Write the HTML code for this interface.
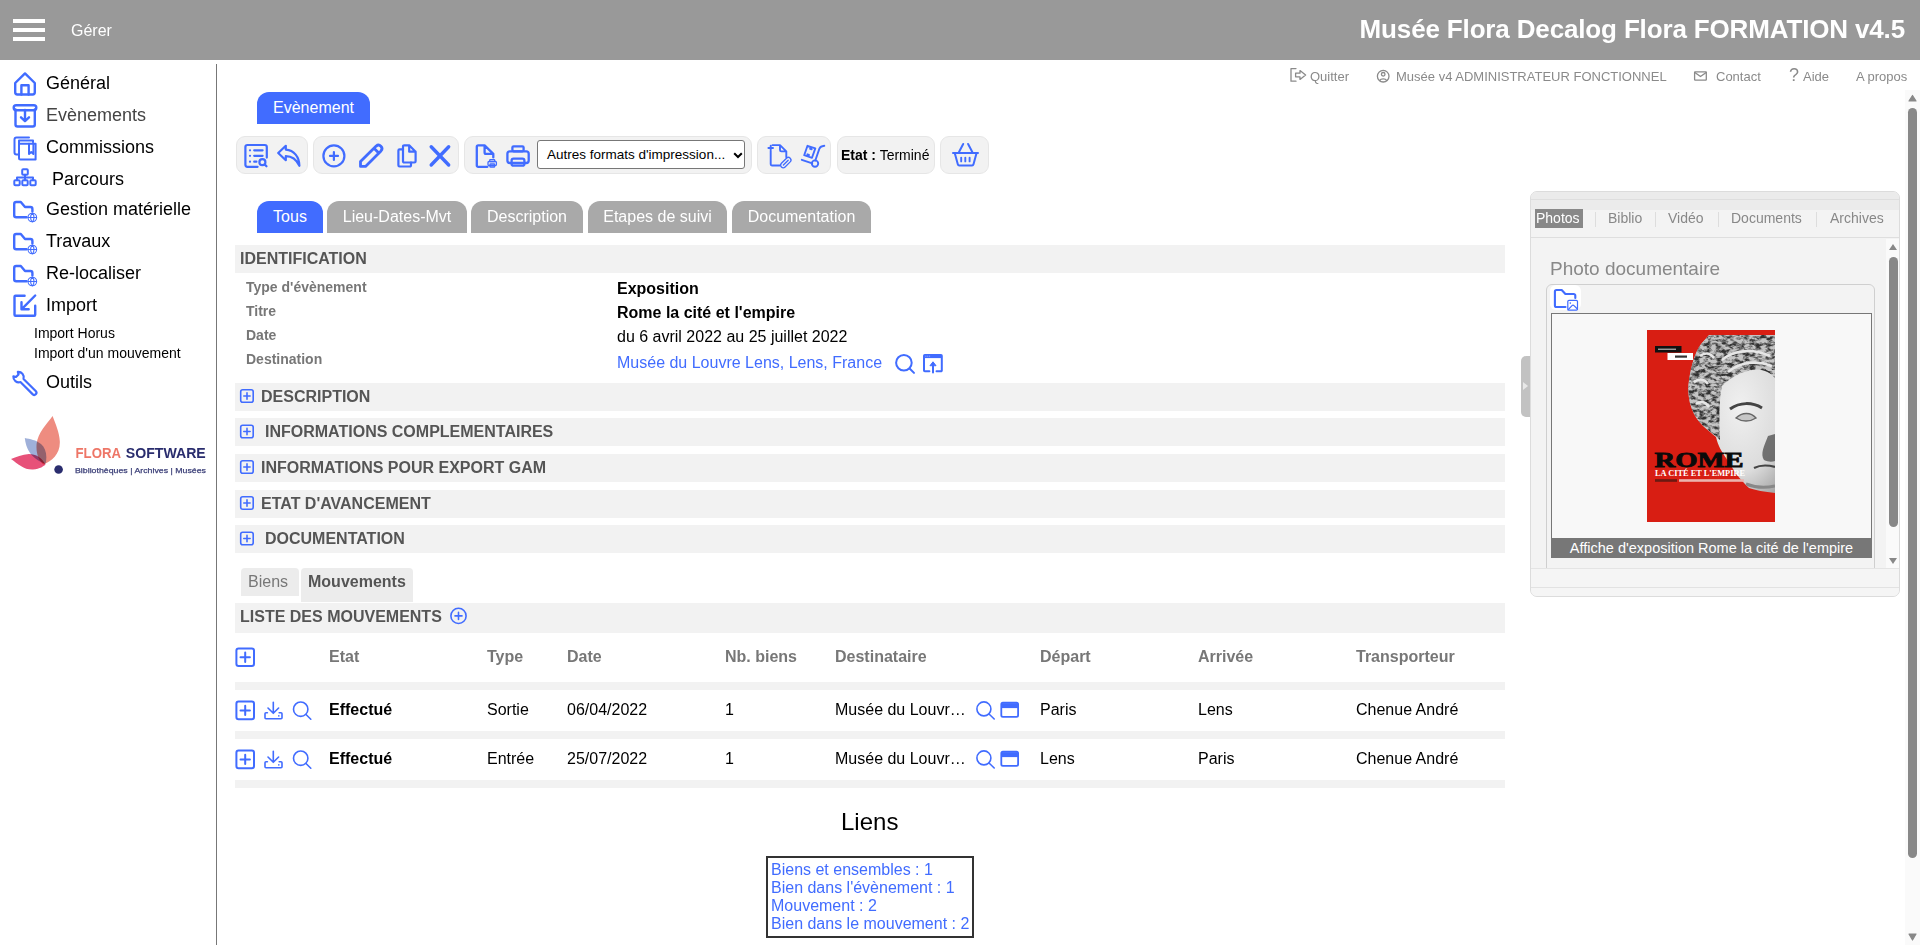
<!DOCTYPE html>
<html><head><meta charset="utf-8">
<style>
*{box-sizing:border-box;margin:0;padding:0}
html,body{width:1920px;height:945px;overflow:hidden;background:#fff;font-family:"Liberation Sans",sans-serif;color:#000}
.a{position:absolute;white-space:nowrap}
svg.i{position:absolute;fill:none;stroke:#416cff;stroke-width:2;stroke-linecap:round;stroke-linejoin:round}
#hdr{position:absolute;left:0;top:0;width:1920px;height:60px;background:#999}
.nav{font-size:18px;color:#000}
.sub{font-size:14px;color:#000}
.toplink{font-size:13px;color:#8a8a8a;top:69px}
.grp{position:absolute;top:136px;height:38px;background:#f2f2f2;border:1px solid #e6e6e6;border-radius:9px}
.tab{position:absolute;top:201px;height:32px;border-radius:12px 12px 0 0;background:#a9a9a9;color:#fff;font-size:16px;text-align:center;line-height:31px}
.sec{position:absolute;left:235px;width:1270px;background:#f2f2f2;height:28px}
.sect{position:absolute;font-size:16px;font-weight:bold;color:#555;top:5px}
.lbl{font-size:14px;font-weight:bold;color:#777}
.val{font-size:16px;color:#000}
.th{font-size:16px;font-weight:bold;color:#777;top:648px}
.td{font-size:16px;color:#000}
.bar{position:absolute;left:235px;width:1270px;height:8px;background:#f2f2f2}
.lnk{font-size:16px;color:#416cff}
</style></head><body>
<div id="hdr"></div>
<div class="a" style="left:13px;top:19px;width:32px;height:4px;background:#fff"></div>
<div class="a" style="left:13px;top:28px;width:32px;height:4px;background:#fff"></div>
<div class="a" style="left:13px;top:37px;width:32px;height:4px;background:#fff"></div>
<div class="a" style="left:71px;top:22px;font-size:16px;color:#fff">Gérer</div>
<div class="a" id="title" style="right:15px;top:14px;font-size:26px;letter-spacing:-0.15px;font-weight:bold;color:#fff">Musée Flora Decalog Flora FORMATION v4.5</div>

<!-- sidebar -->
<div class="a" style="left:216px;top:64px;width:1px;height:881px;background:#777"></div>
<div class="a nav" style="left:46px;top:73px">Général</div>
<div class="a nav" style="left:46px;top:105px;color:#444">Evènements</div>
<div class="a nav" style="left:46px;top:137px">Commissions</div>
<div class="a nav" style="left:52px;top:169px">Parcours</div>
<div class="a nav" style="left:46px;top:199px">Gestion matérielle</div>
<div class="a nav" style="left:46px;top:231px">Travaux</div>
<div class="a nav" style="left:46px;top:263px">Re-localiser</div>
<div class="a nav" style="left:46px;top:295px">Import</div>
<div class="a sub" style="left:34px;top:325px">Import Horus</div>
<div class="a sub" style="left:34px;top:345px">Import d'un mouvement</div>
<div class="a nav" style="left:46px;top:372px">Outils</div>


<svg width="210" height="70" viewBox="5 410 210 70" style="position:absolute;left:5px;top:410px">
<g style="isolation:isolate"><path style="mix-blend-mode:multiply" d="M52.6 416 C47 424 38 432 36.6 444 C35.8 454 39 461 43.5 464.5 C52 461 60.5 454 59.8 441 C59.3 432 55.5 424 52.6 416 Z" fill="#ee8c80"/>
<path style="mix-blend-mode:multiply" d="M24.8 438 C26 448 30 458 45.5 464 C47.5 456 46 448 41 444 C36 440 30 439 24.8 438 Z" fill="#8ea2d2" opacity="0.85"/>
<path style="mix-blend-mode:multiply" d="M11 459 C18 464 24 470 33 469.6 C40 469 44 466 45.5 464.5 C42 458 36 454 29 454 C22 454.5 16 457 11 459 Z" fill="#e5426e" opacity="0.92"/></g>
<circle cx="58.6" cy="469.5" r="4.3" fill="#2a2d6e"/>
<text x="75.5" y="458.2" font-family="Liberation Sans" font-weight="bold" font-size="13.8" textLength="45.5" lengthAdjust="spacingAndGlyphs" fill="#ee7667">FLORA</text>
<text x="125.8" y="458.2" font-family="Liberation Sans" font-weight="bold" font-size="13.8" textLength="80" lengthAdjust="spacingAndGlyphs" fill="#2a2d6e">SOFTWARE</text>
<text x="75" y="472.6" font-family="Liberation Sans" font-size="7.8" stroke="#3b3f78" stroke-width="0.25" textLength="131" lengthAdjust="spacingAndGlyphs" fill="#3b3f78">Bibliothèques | Archives | Musées</text>
</svg>

<!-- top links -->
<div class="a toplink" style="left:1310px">Quitter</div>
<div class="a toplink" style="left:1396px">Musée v4 ADMINISTRATEUR FONCTIONNEL</div>
<div class="a toplink" style="left:1716px">Contact</div>
<div class="a toplink" style="left:1789px;top:65px;font-size:18px">?</div><div class="a toplink" style="left:1803px">Aide</div>
<div class="a toplink" style="left:1856px">A propos</div>

<!-- main -->
<div class="a" style="left:257px;top:92px;width:113px;height:32px;background:#416cff;border-radius:12px 12px 0 0;color:#fff;font-size:16px;text-align:center;line-height:31px">Evènement</div>

<div class="grp" style="left:235.5px;width:72px"></div>
<div class="grp" style="left:313px;width:146px"></div>
<div class="grp" style="left:464px;width:288px"></div>
<div class="grp" style="left:757px;width:74px"></div>
<div class="grp" style="left:837px;width:98px"></div>
<div class="grp" style="left:940px;width:49px"></div>
<div class="a" style="left:537px;top:140px;width:208px;height:29px;border:1px solid #777;border-radius:3px;background:#fff;font-size:13.5px;line-height:27px;padding-left:9px">Autres formats d'impression...<svg style="position:absolute;left:195px;top:11px" width="10" height="7"><path d="M1.2 1.2 L5 5 L8.8 1.2" fill="none" stroke="#000" stroke-width="2"/></svg></div>
<div class="a" style="left:841px;top:147px;font-size:14px"><b>Etat :</b> Terminé</div>

<div class="tab" style="left:257px;width:66px;background:#416cff">Tous</div>
<div class="tab" style="left:327px;width:140px">Lieu-Dates-Mvt</div>
<div class="tab" style="left:471px;width:112px">Description</div>
<div class="tab" style="left:588px;width:139px">Etapes de suivi</div>
<div class="tab" style="left:732px;width:139px">Documentation</div>

<div class="sec" style="top:245px"><div class="sect" style="left:5px">IDENTIFICATION</div></div>
<div class="a lbl" style="left:246px;top:279px">Type d'évènement</div>
<div class="a lbl" style="left:246px;top:303px">Titre</div>
<div class="a lbl" style="left:246px;top:327px">Date</div>
<div class="a lbl" style="left:246px;top:351px">Destination</div>
<div class="a val" style="left:617px;top:280px;font-weight:bold">Exposition</div>
<div class="a val" style="left:617px;top:304px;font-weight:bold">Rome la cité et l'empire</div>
<div class="a val" style="left:617px;top:328px">du 6 avril 2022 au 25 juillet 2022</div>
<div class="a val" style="left:617px;top:354px;color:#416cff">Musée du Louvre Lens, Lens, France</div>

<div class="sec" style="top:383px"><div class="sect" style="left:26px">DESCRIPTION</div></div>
<div class="sec" style="top:418px"><div class="sect" style="left:30px">INFORMATIONS COMPLEMENTAIRES</div></div>
<div class="sec" style="top:454px"><div class="sect" style="left:26px">INFORMATIONS POUR EXPORT GAM</div></div>
<div class="sec" style="top:490px"><div class="sect" style="left:26px">ETAT D'AVANCEMENT</div></div>
<div class="sec" style="top:525px"><div class="sect" style="left:30px">DOCUMENTATION</div></div>

<div class="a" style="left:241px;top:568px;width:58px;height:28px;background:#ececec;border-radius:4px 4px 0 0;font-size:16px;color:#777;line-height:27px;padding-left:7px">Biens</div>
<div class="a" style="left:301px;top:568px;width:112px;height:34px;background:#ececec;border-radius:4px 4px 0 0;font-size:16px;color:#555;font-weight:bold;line-height:27px;padding-left:7px">Mouvements</div>
<div class="sec" style="top:603px;height:30px"><div class="sect" style="left:5px;top:5px">LISTE DES MOUVEMENTS</div></div>

<div class="a th" style="left:329px">Etat</div>
<div class="a th" style="left:487px">Type</div>
<div class="a th" style="left:567px">Date</div>
<div class="a th" style="left:725px">Nb. biens</div>
<div class="a th" style="left:835px">Destinataire</div>
<div class="a th" style="left:1040px">Départ</div>
<div class="a th" style="left:1198px">Arrivée</div>
<div class="a th" style="left:1356px">Transporteur</div>
<div class="bar" style="top:682px"></div>
<div class="bar" style="top:731px"></div>
<div class="bar" style="top:780px"></div>

<div class="a td" style="left:329px;top:701px;font-weight:bold">Effectué</div>
<div class="a td" style="left:487px;top:701px">Sortie</div>
<div class="a td" style="left:567px;top:701px">06/04/2022</div>
<div class="a td" style="left:725px;top:701px">1</div>
<div class="a td" style="left:835px;top:701px">Musée du Louvr…</div>
<div class="a td" style="left:1040px;top:701px">Paris</div>
<div class="a td" style="left:1198px;top:701px">Lens</div>
<div class="a td" style="left:1356px;top:701px">Chenue André</div>

<div class="a td" style="left:329px;top:750px;font-weight:bold">Effectué</div>
<div class="a td" style="left:487px;top:750px">Entrée</div>
<div class="a td" style="left:567px;top:750px">25/07/2022</div>
<div class="a td" style="left:725px;top:750px">1</div>
<div class="a td" style="left:835px;top:750px">Musée du Louvr…</div>
<div class="a td" style="left:1040px;top:750px">Lens</div>
<div class="a td" style="left:1198px;top:750px">Paris</div>
<div class="a td" style="left:1356px;top:750px">Chenue André</div>

<div class="a" style="left:841px;top:808px;font-size:24px">Liens</div>
<div class="a" style="left:766px;top:856px;width:208px;height:82px;border:2px solid #333;padding:3px 0 0 3px;line-height:18px">
<div class="lnk">Biens et ensembles : 1</div>
<div class="lnk">Bien dans l'évènement : 1</div>
<div class="lnk">Mouvement : 2</div>
<div class="lnk">Bien dans le mouvement : 2</div>
</div>

<!-- right panel -->
<div class="a" style="left:1530px;top:191px;width:370px;height:406px;background:#f3f3f3;border:1px solid #dcdcdc;border-radius:7px;overflow:hidden">
 <div style="position:absolute;left:0;top:0;width:368px;height:8px;background:#ebebeb;border-bottom:1px solid #dedede"></div>
 <div style="position:absolute;left:0;top:8px;width:368px;height:10px;background:#ebebeb"></div>
 <div style="position:absolute;left:0;top:45px;width:368px;height:1px;background:#dedede"></div>
 <div style="position:absolute;left:4px;top:17px;width:48px;height:19px;background:#888"></div>
 <div class="a" style="left:5px;top:18px;font-size:14px;color:#fff;line-height:17px">Photos</div>
 <div class="a" style="left:77px;top:18px;font-size:14px;color:#888;line-height:17px">Biblio</div>
 <div class="a" style="left:137px;top:18px;font-size:14px;color:#888;line-height:17px">Vidéo</div>
 <div class="a" style="left:200px;top:18px;font-size:14px;color:#888;line-height:17px">Documents</div>
 <div class="a" style="left:299px;top:18px;font-size:14px;color:#888;line-height:17px">Archives</div>
 <div style="position:absolute;left:64px;top:20px;width:1px;height:15px;background:#ddd"></div>
 <div style="position:absolute;left:124px;top:20px;width:1px;height:15px;background:#ddd"></div>
 <div style="position:absolute;left:187px;top:20px;width:1px;height:15px;background:#ddd"></div>
 <div style="position:absolute;left:285px;top:20px;width:1px;height:15px;background:#ddd"></div>
 <div style="position:absolute;left:355px;top:47px;width:14px;height:330px;background:#fafafa"></div>
 <div style="position:absolute;left:358px;top:65px;width:9px;height:270px;background:#888;border-radius:5px"></div>
 <div style="position:absolute;left:358px;top:52px;width:0;height:0;border-left:4.5px solid transparent;border-right:4.5px solid transparent;border-bottom:6px solid #888"></div>
 <div style="position:absolute;left:358px;top:366px;width:0;height:0;border-left:4.5px solid transparent;border-right:4.5px solid transparent;border-top:6px solid #888"></div>
 <div class="a" style="left:19px;top:65.5px;font-size:19px;color:#888">Photo documentaire</div>
 <div style="position:absolute;left:15px;top:92px;width:329px;height:290px;border:1px solid #cfcfcf;border-radius:6px"></div>
 <div style="position:absolute;left:19px;top:93px;width:31px;height:25px;background:#fff;border-radius:6px"></div>
 <div style="position:absolute;left:20px;top:121px;width:321px;height:245px;background:#f8f8f8;border:1px solid #777"></div>
 <div style="position:absolute;left:20px;top:346px;width:321px;height:20px;background:#777;color:#fff;font-size:14.5px;text-align:center;line-height:20px">Affiche d'exposition Rome la cité de l'empire</div>
 <div style="position:absolute;left:0;top:376px;width:368px;height:30px;background:#f5f5f5;border-top:1px solid #e4e4e4"></div>
 <div style="position:absolute;left:0;top:395px;width:368px;height:1px;background:#e2e2e2"></div>
</div>

<svg width="128" height="192" viewBox="1647 330 128 192" style="position:absolute;left:1647px;top:330px">
<defs>
<radialGradient id="fc" cx="0.6" cy="0.45" r="0.65"><stop offset="0" stop-color="#f0f0f0"/><stop offset="0.6" stop-color="#dcdcdc"/><stop offset="1" stop-color="#9c9c9c"/></radialGradient>
<filter id="tx" x="0" y="0" width="100%" height="100%"><feTurbulence type="fractalNoise" baseFrequency="0.18 0.3" numOctaves="3" seed="7"/><feColorMatrix type="matrix" values="0 0 0 0 0  0 0 0 0 0  0 0 0 0 0  3.2 0 0 0 -1.25"/></filter>
<clipPath id="hc"><path d="M1709 335 H1775 V493 C1765 492 1755 490 1749 488 C1740 480 1732 468 1726 458 C1722 452 1718 446 1716 437 C1708 430 1699 424 1694 414 C1689 404 1687 392 1689 380 C1691 366 1695 352 1701 344 Z"/></clipPath>
<clipPath id="hr"><path d="M1709 335 H1775 V378 C1770 372 1762 368 1752 370 C1740 372 1730 378 1722 386 C1719 400 1719 420 1720 440 C1712 432 1700 426 1694 414 C1689 404 1687 392 1689 380 C1691 366 1695 352 1701 344 Z"/></clipPath>
</defs>
<rect x="1647" y="330" width="128" height="192" fill="#d81e13"/>
<g clip-path="url(#hc)">
<rect x="1680" y="330" width="100" height="170" fill="url(#fc)"/>
<g clip-path="url(#hr)">
<rect x="1680" y="330" width="100" height="120" fill="#c4c4c4"/>
<rect x="1680" y="330" width="100" height="120" fill="#000" filter="url(#tx)" opacity="0.75"/>
<path d="M1722 360 C1734 350 1752 348 1770 356 M1728 372 C1740 362 1756 360 1772 366 M1700 356 q8 -6 14 2 M1694 382 q8 -6 14 2 M1696 404 q8 -5 13 3" stroke="#e6e6e6" stroke-width="2.6" fill="none"/>
</g>
<path d="M1730 409 C1740 402 1752 402 1762 408" stroke="#444" stroke-width="3" fill="none"/>
<path d="M1736 418 C1742 412 1751 412 1756 418 C1750 422 1742 422 1736 418 Z" fill="#c6c6c6" stroke="#666" stroke-width="1.4"/>
<path d="M1768 436 C1764 446 1760 454 1764 460 C1768 462 1772 462 1775 461 V434 Z" fill="#555" opacity="0.8"/>
<path d="M1754 468 C1760 465 1768 465 1775 467" stroke="#444" stroke-width="2.2" fill="none"/>
<path d="M1746 484 C1756 488 1766 488 1775 486" stroke="#888" stroke-width="3" fill="none"/>
</g>
<rect x="1655" y="346" width="26.5" height="6.5" fill="#111"/>
<rect x="1667.5" y="353" width="25.5" height="7" fill="#fff"/>
<rect x="1658" y="348.6" width="18" height="1.3" fill="#aaa"/>
<rect x="1675" y="355.5" width="12" height="2.2" fill="#333"/>
<text x="1654.5" y="466.8" font-family="Liberation Serif" font-weight="bold" font-size="21" textLength="89" lengthAdjust="spacingAndGlyphs" fill="#0a0a0a" stroke="#0a0a0a" stroke-width="0.8">ROME</text>
<text x="1655" y="476.3" font-family="Liberation Serif" font-weight="bold" font-size="8" textLength="90" lengthAdjust="spacingAndGlyphs" fill="#fff">LA CITÉ ET L'EMPIRE</text>
<rect x="1655" y="479.2" width="22" height="2.6" fill="#6a1a12"/>
<rect x="1679" y="479.2" width="65" height="2.6" fill="#eab4ad"/>
</svg>
<div class="a" style="left:1521px;top:356px;width:9px;height:61px;background:#c2c2c2;border-radius:5px 0 0 5px"></div>
<div class="a" style="left:1523px;top:382px;width:0;height:0;border-top:4px solid transparent;border-bottom:4px solid transparent;border-left:5px solid #e8e8e8"></div>


<!-- page scrollbar -->
<div class="a" style="left:1905px;top:90px;width:15px;height:855px;background:#fafafa"></div>
<div class="a" style="left:1908px;top:108px;width:9px;height:750px;background:#888;border-radius:4.5px"></div>
<svg class="a" style="left:1905px;top:90px" width="15" height="855"><path d="M4 11 L7.5 5.5 L11 11 Z M4 844 L7.5 850 L11 844 Z" fill="#888" stroke="#888" stroke-width="1.2" stroke-linejoin="round"/></svg>

<svg class="ov" width="1920" height="945" viewBox="0 0 1920 945" style="position:absolute;left:0;top:0;pointer-events:none" fill="none" stroke="#416cff" stroke-linecap="round" stroke-linejoin="round">
<!-- sidebar icons -->
<g stroke-width="2.4">
<path d="M15.2 83 L25 73.4 L34.8 83 V92.3 a2.2 2.2 0 0 1 -2.2 2.2 H17.4 a2.2 2.2 0 0 1 -2.2 -2.2 Z"/>
<path d="M21.4 94.5 V85.2 H28.6 V94.5"/>
<path d="M16.2 105.2 H33.8 a2.3 2.3 0 0 1 0 5 H16.2 a2.3 2.3 0 0 1 0 -5 Z"/>
<path d="M15.5 109.5 V124.5 a2 2 0 0 0 2 2 H32.8 a2 2 0 0 0 2 -2 V109.5"/>
<path d="M25 110 V121 M21 117.3 L25 121.2 L29 117.3"/>
</g>
<g stroke-width="2">
<path d="M29 137.5 H16.5 a2 2 0 0 0 -2 2 V152.5 a2 2 0 0 0 2 2 H19"/>
<path d="M33 142 V140.5 H19 V158 a1.5 1.5 0 0 0 1.5 1.5 H35.6 V143.8 H19"/>
<path d="M29 143.8 V154 L31.2 152 L33.4 154 V143.8"/>
</g>
<g stroke-width="2">
<rect x="22.2" y="169.3" width="5.6" height="5.4" rx="1"/>
<rect x="14.3" y="180.3" width="5.4" height="5" rx="1"/>
<rect x="22.3" y="180.3" width="5.4" height="5" rx="1"/>
<rect x="30.3" y="180.3" width="5.4" height="5" rx="1"/>
<path d="M25 174.7 V180.3 M17 180.3 V177.5 H33 V180.3"/>
</g>
<g id="fg" stroke-width="2.4">
<path d="M26.5 217.2 H16.2 a2 2 0 0 1 -2 -2 V204 a2 2 0 0 1 2 -2 H20.8 L25 207 H30.4 a2 2 0 0 1 2 2 V211.5"/>
<g stroke-width="1.1"><circle cx="32.3" cy="217.5" r="4.3"/><path d="M28 217.5 H36.6 M32.3 213.2 C30 215.5 30 219.5 32.3 221.8 C34.6 219.5 34.6 215.5 32.3 213.2"/></g>
</g>
<use href="#fg" y="32"/>
<use href="#fg" y="64"/>
<g stroke-width="2.4">
<path d="M24.6 295.7 H15.5 a1 1 0 0 0 -1 1 V314.8 a1 1 0 0 0 1 1 H34.2 a1 1 0 0 0 1 -1 V305.7"/>
<path d="M35.2 295.5 L21.5 309.3 M21.5 302.2 V309.3 H28.7"/>
</g>
<path stroke-width="2.2" transform="translate(0.3 0.8)" d="M23.24 378.12 L35.6 390.5 A2.2 2.2 0 0 1 32.5 393.6 L20.12 381.24 A5.5 5.5 0 0 1 13.08 375.55 L15.67 376.21 L18.21 373.67 L17.55 371.08 A5.5 5.5 0 0 1 23.24 378.12 Z"/>

<!-- toolbar icons -->
<g stroke-width="2.2">
<path d="M257.6 166.8 H247.4 a2 2 0 0 1 -2 -2 V147 a2 2 0 0 1 2 -2 H264.8 a2 2 0 0 1 2 2 V157.6"/>
<path d="M254.2 150.3 H262.6 M254.2 155.8 H262.6 M254.2 161.7 H256.4 M250 150.3 h0.01 M250 155.8 h0.01 M250 161.7 h0.01"/>
<circle cx="262.4" cy="162.2" r="3"/><path d="M264.6 164.4 L266.5 166.3"/>
<path d="M278.2 153 L285.8 145.8 V149.6 C294 150.2 299.4 157 299.4 165.8 C296 158.6 291 156.2 285.8 156.2 V160.2 Z"/>
<circle cx="333.9" cy="155.9" r="10.5"/><path d="M330 155.9 H338 M333.9 152 V160"/>
</g>
<g stroke-width="2.8">
<path d="M360.5 166.4 H365.5 L381 150.9 a3.4 3.4 0 0 0 -4.8 -4.8 L360.5 161.5 Z M374 148.3 L378.8 153.1"/>
</g>
<g stroke-width="2.2">
<path d="M409.2 145.3 H404.2 a1.2 1.2 0 0 0 -1.2 1.2 V161.3 a1.2 1.2 0 0 0 1.2 1.2 H414.4 a1.2 1.2 0 0 0 1.2 -1.2 V151.7 Z V151.7 H415.6"/>
<path d="M403 149.4 H399.6 a1.2 1.2 0 0 0 -1.2 1.2 V165.3 a1.2 1.2 0 0 0 1.2 1.2 H409.8 a1.2 1.2 0 0 0 1.2 -1.2 V162.5"/>
</g>
<path stroke-width="3.4" d="M431.2 146.8 L448.7 165 M448.7 146.8 L431.2 165"/>
<g stroke-width="2.3">
<path d="M487.4 166.8 H478.2 a1.4 1.4 0 0 1 -1.4 -1.4 V146.8 a1.4 1.4 0 0 1 1.4 -1.4 H484.6 L493.3 153.8 V157.4 M484.6 145.4 V152.4 a1.4 1.4 0 0 0 1.4 1.4 H493.3"/>
</g>
<g stroke-width="1.3">
<rect x="488" y="161.5" width="8.4" height="4" rx="1"/><rect x="489.7" y="159.6" width="5" height="2" rx="0.6"/><rect x="490" y="164" width="4.6" height="3" rx="0.6"/>
</g>
<g stroke-width="2.3">
<rect x="507.4" y="151.3" width="21.3" height="11.7" rx="2.5"/>
<rect x="512.4" y="146.3" width="11.2" height="5" rx="1.2"/>
<rect x="511.6" y="158.7" width="12.8" height="7" rx="2"/>
</g>
<g stroke-width="1.9">
<path d="M786.3 157.3 V151.4 L780 145.1 H772.5 M780 145.1 V150 a1.4 1.4 0 0 0 1.4 1.4 H786.3 M770.7 151 V164.3 a1.2 1.2 0 0 0 1.2 1.2 H779.6 M768.4 148 H773 M770.7 145.7 V150.3"/>
</g>
<g transform="rotate(-45 785.8 162.6)" stroke-width="1.3"><rect x="779.6" y="160" width="12.4" height="5.2" rx="2.6"/><path d="M782.4 162.6 H789.2"/></g>
<g stroke-width="1.9">
<path d="M804.2 155.2 L807.5 145.8 L815.3 148.4 L812 157.8 Z M810.6 147.2 l-0.5 1.6 l1.6 0.5 M808.5 156.4 l0.5 -1.6 l-1.6 -0.5" />
<path d="M801.8 159.8 L812.3 163.3 M815.3 160.5 L819.4 148.6 Q820.5 146.2 824.3 145.8"/>
<circle cx="815" cy="163.6" r="3.2"/>
</g>
<g stroke-width="2">
<path d="M963.2 144 L959 152 M968.1 144 L972.3 152 M953 153.1 H978 M954.8 153.3 L957.8 164.3 a1.6 1.6 0 0 0 1.5 1.2 H972 a1.6 1.6 0 0 0 1.5 -1.2 L976.5 153.3"/>
<path stroke-width="1.9" d="M961.2 157.6 V161.4 M965.3 157.6 V161.4 M969.6 157.6 V161.4"/>
</g>

<!-- destination icons -->
<g stroke-width="2">
<circle cx="903.9" cy="362.8" r="7.8"/><path d="M909.6 368.5 L914 372.9"/>
<path d="M929.4 371.2 H924.8 a0.8 0.8 0 0 1 -0.8 -0.8 V355.8 a0.8 0.8 0 0 1 0.8 -0.8 H941 a0.8 0.8 0 0 1 0.8 0.8 V370.4 a0.8 0.8 0 0 1 -0.8 0.8 H936.5"/>
<path d="M924 356.6 H941.8" stroke-width="3" stroke-linecap="butt"/>
<path d="M925.5 356.2 h0.8 M927.4 356.2 h0.8 M929.3 356.2 h0.8" stroke="#fff" stroke-width="1" stroke-linecap="butt" opacity="0.6"/>
<path d="M933 372.6 V364.5"/><path d="M930.2 365.4 L933 361.8 L935.8 365.4 Z" fill="#416cff" stroke-width="1"/>
</g>
<!-- section plus squares -->
<g id="ps" stroke-width="1.6">
<rect x="240.7" y="389.8" width="12.5" height="12.5" rx="2"/><path d="M243.8 396 H250.1 M247 392.9 V399.2"/>
</g>
<use href="#ps" y="35.5"/>
<use href="#ps" y="71"/>
<use href="#ps" y="107"/>
<use href="#ps" y="142.5"/>
<g stroke-width="1.6"><circle cx="458.5" cy="615.9" r="7.6"/><path d="M455 615.9 H462 M458.5 612.4 V619.4"/></g>
<!-- table icons -->
<g stroke-width="2"><rect x="236.4" y="648.4" width="17.6" height="17.6" rx="2.2"/><path d="M240.5 657.2 H249.9 M245.2 652.5 V661.9"/></g>
<g id="rowic">
<g stroke-width="2"><rect x="236.4" y="701.6" width="17.6" height="17.6" rx="2.2"/><path d="M240.5 710.4 H249.9 M245.2 705.7 V715.1"/></g>
<g stroke-width="1.6">
<path d="M273.3 702.2 V713 M268 708 L273.3 713.3 L278.6 708"/>
<path d="M267.4 712.8 H266 a1 1 0 0 0 -1 1 V717.8 a1 1 0 0 0 1 1 H281 a1 1 0 0 0 1 -1 V713.8 a1 1 0 0 0 -1 -1 H279.2"/>
<path d="M278.8 715.9 h0.01"/>
</g>
<g stroke-width="1.6"><circle cx="300.7" cy="709.2" r="7.2"/><path d="M306 714.5 L310.8 719.2"/></g>
<g stroke-width="1.6"><circle cx="983.9" cy="708.9" r="7"/><path d="M989 714 L994.2 719"/></g>
<g stroke-width="1.8"><rect x="1001.3" y="702.6" width="16.8" height="14.2" rx="1.6"/><path d="M1001.3 705.6 H1018.1" stroke-width="5" stroke-linecap="butt"/></g>
</g>
<use href="#rowic" y="49"/>
<!-- top link icons -->
<g stroke="#8a8a8a" stroke-width="1.3">
<path d="M1296 68.6 H1291 V81.2 H1296"/>
<path d="M1295.6 73.2 H1300 V70.6 L1305.6 75 L1300 79.4 V76.8 H1295.6 Z"/>
<circle cx="1383.2" cy="76.2" r="5.8"/><circle cx="1383.2" cy="74.3" r="1.8"/><path d="M1379.6 80.6 a4 3 0 0 1 7.2 0"/>
<rect x="1694.6" y="71.8" width="11.7" height="8.4" rx="0.6"/><path d="M1694.8 72.4 L1700.5 76.6 L1706.2 72.4"/>
</g>
<!-- panel folder image icon -->
<g stroke-width="2.1">
<path d="M1565.5 307 H1556.5 a1.6 1.6 0 0 1 -1.6 -1.6 V291.6 a1.6 1.6 0 0 1 1.6 -1.6 H1561.7 L1565.4 294 H1573.7 a1.6 1.6 0 0 1 1.6 1.6 V298"/>
</g>
<g stroke-width="1.2">
<rect x="1567.8" y="300.3" width="9.7" height="9.8" rx="1.2"/><path d="M1568 309.8 L1572 305.6 a1.4 1.4 0 0 1 2 0 L1577.4 309"/><path d="M1570.3 303.1 h0.01" stroke-width="1.6"/>
</g>
</svg>

</body></html>
